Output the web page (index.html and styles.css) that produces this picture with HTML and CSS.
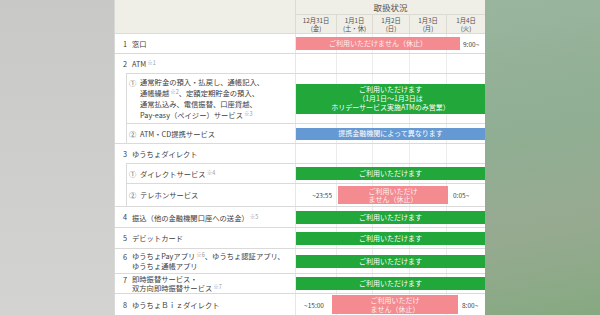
FILE: index.html
```html
<!DOCTYPE html>
<html lang="ja">
<head>
<meta charset="utf-8">
<title>年末年始の取扱状況</title>
<link rel="stylesheet" href="styles.css">
</head>
<body>
<div class="page">
  <div class="side-left"></div>
  <div class="table">
    <div class="row head">
      <div class="label"></div>
      <div class="head-data">
        <div class="head-title">取扱状況</div>
        <div class="dates">
          <div class="date"><span>12月31日</span><span>(金)</span></div>
          <div class="date"><span>1月1日</span><span>(土・休)</span></div>
          <div class="date"><span>1月2日</span><span>(日)</span></div>
          <div class="date"><span>1月3日</span><span>(月)</span></div>
          <div class="date"><span>1月4日</span><span>(火)</span></div>
        </div>
      </div>
    </div>

    <div class="row h20">
      <div class="label"><span class="num">1</span><span>窓口</span></div>
      <div class="data">
        <div class="bar pink w164">ご利用いただけません（休止）</div>
        <div class="time after3">9:00~</div>
      </div>
    </div>

    <div class="row h20">
      <div class="label"><span class="num">2</span><span>ATM<span class="note">※1</span></span></div>
      <div class="data"></div>
    </div>

    <div class="row sub h50">
      <div class="label"><span class="mark">①</span><span class="lines">通常貯金の預入・払戻し、通帳記入、<br>通帳繰越<span class="note">※2</span>、定額定期貯金の預入、<br>通常払込み、電信振替、口座貸越、<br>Pay-easy（ペイジー）サービス<span class="note">※3</span></span></div>
      <div class="data">
        <div class="bar green full tall">ご利用いただけます<br>（1月1日～1月3日は<br>ホリデーサービス実施ATMのみ営業）</div>
      </div>
    </div>

    <div class="row sub h20">
      <div class="label"><span class="mark">②</span><span>ATM・CD提携サービス</span></div>
      <div class="data">
        <div class="bar blue full">提携金融機関によって異なります</div>
      </div>
    </div>

    <div class="row h20">
      <div class="label"><span class="num">3</span><span>ゆうちょダイレクト</span></div>
      <div class="data"></div>
    </div>

    <div class="row sub h20">
      <div class="label"><span class="mark">①</span><span>ダイレクトサービス<span class="note">※4</span></span></div>
      <div class="data">
        <div class="bar green full">ご利用いただけます</div>
      </div>
    </div>

    <div class="row sub h23">
      <div class="label"><span class="mark">②</span><span>テレホンサービス</span></div>
      <div class="data">
        <div class="time before42">~23:55</div>
        <div class="bar pink w110 two">ご利用いただけ<br>ません（休止）</div>
        <div class="time after5">0:05~</div>
      </div>
    </div>

    <div class="row h21">
      <div class="label"><span class="num">4</span><span>振込（他の金融機関口座への送金）<span class="note">※5</span></span></div>
      <div class="data">
        <div class="bar green full">ご利用いただけます</div>
      </div>
    </div>

    <div class="row h21">
      <div class="label"><span class="num">5</span><span>デビットカード</span></div>
      <div class="data">
        <div class="bar green full">ご利用いただけます</div>
      </div>
    </div>

    <div class="row h25">
      <div class="label"><span class="num">6</span><span class="lines">ゆうちょPayアプリ<span class="note">※6</span>、ゆうちょ認証アプリ、<br>ゆうちょ通帳アプリ</span></div>
      <div class="data">
        <div class="bar green full">ご利用いただけます</div>
      </div>
    </div>

    <div class="row h20">
      <div class="label"><span class="num">7</span><span class="lines">即時振替サービス・<br>双方向即時振替サービス<span class="note">※7</span></span></div>
      <div class="data">
        <div class="bar green full">ご利用いただけます</div>
      </div>
    </div>

    <div class="row h22">
      <div class="label"><span class="num">8</span><span>ゆうちょＢｉｚダイレクト</span></div>
      <div class="data">
        <div class="time before36">~15:00</div>
        <div class="bar pink w126 two tall19">ご利用いただけ<br>ません（休止）</div>
        <div class="time after4">8:00~</div>
      </div>
    </div>
  </div>
  <div class="side-right"></div>
</div>
</body>
</html>
```

FILE: styles.css
```css
html, body {
  margin: 0;
  padding: 0;
}

body {
  width: 600px;
  height: 315px;
  overflow: hidden;
  font-family: "Noto Sans CJK JP", "Noto Sans", sans-serif;
  color: #3c3c3c;
}

.page {
  display: flex;
  width: 600px;
  height: 315px;
}

.side-left {
  width: 115px;
  flex: none;
  background: linear-gradient(#c8c8c7, #d3d3d2);
  border-right: 1px solid #d8d8d6;
  box-sizing: border-box;
}

.side-right {
  flex: 1;
  background: linear-gradient(170deg, #9ab59e 0%, #8fae93 40%, #97aa91 70%, #86a981 100%);
}

.table {
  width: 370px;
  flex: none;
  background: #fff;
  display: flex;
  flex-direction: column;
  overflow: hidden;
}

.row {
  display: flex;
  box-sizing: border-box;
  border-top: 1px solid #dadada;
  flex: none;
}

.row.sub {
  margin-left: 11px;
  border-left: 1px solid #dadada;
}

.h20 { height: 20px; }
.h21 { height: 21px; }
.h22 { height: 22px; }
.h23 { height: 23px; }
.h25 { height: 25px; }
.h50 { height: 50px; }

.label {
  width: 181px;
  flex: none;
  box-sizing: border-box;
  padding-left: 8px;
  display: flex;
  align-items: center;
  font-size: 7.3px;
  line-height: 10px;
  white-space: nowrap;
}

.sub .label {
  width: 169px;
  padding-left: 2px;
}

.num {
  width: 9px;
  flex: none;
}

.mark {
  width: 11px;
  flex: none;
  color: #666;
}

.sub.h50 .mark {
  align-self: flex-start;
  margin-top: 4px;
  line-height: 10.5px;
}

.sub.h50 .lines {
  line-height: 10.5px;
}

.h25 .num {
  align-self: flex-start;
  margin-top: 3px;
}

.h25 .lines {
  line-height: 9.5px;
}

.h20 .lines {
  line-height: 8.5px;
}

.h20 .label:has(.lines) .num {
  align-self: flex-start;
  margin-top: 1.5px;
  line-height: 8.5px;
}

.note {
  font-size: 5.5px;
  color: #9a9a9a;
  vertical-align: 2px;
  margin-left: 1px;
}

.data {
  flex: 1;
  display: flex;
  align-items: center;
  border-left: 1px solid #e6e6e6;
  margin-left: -1px;
  background:
    linear-gradient(#ececec, #ececec) 40px 0 / 1px 100% no-repeat,
    linear-gradient(#ececec, #ececec) 76px 0 / 1px 100% no-repeat,
    linear-gradient(#ececec, #ececec) 113px 0 / 1px 100% no-repeat,
    linear-gradient(#ececec, #ececec) 150px 0 / 1px 100% no-repeat;
}

.bar {
  height: 13px;
  flex: none;
  display: flex;
  align-items: center;
  justify-content: center;
  text-align: center;
  color: #fff;
  font-size: 7px;
  line-height: 9px;
  white-space: nowrap;
}

.bar.full { width: 189px; }
.bar.w164 { width: 164px; }
.bar.w110 { width: 110px; }
.bar.w126 { width: 126px; }

.bar.tall { height: 30px; }
.bar.two { height: 18px; line-height: 8.5px; }
.bar.tall19 { height: 19px; }

.blue { background: #6499d3; height: 12px; }
.green { background: #21a73a; }
.pink { background: #f48b90; color: #fdf0f0; }

.time {
  font-size: 6.5px;
  color: #444;
  white-space: nowrap;
  flex: none;
}

.after3 { margin-left: 3px; }
.after4 { margin-left: 4px; }
.after5 { margin-left: 5px; }

.before42 {
  width: 42px;
  box-sizing: border-box;
  padding-right: 6px;
  text-align: right;
}

.before36 {
  width: 36px;
  text-align: center;
}

/* header */
.row.head {
  height: 33px;
  border-top: none;
  background: #efeee7;
}

.head-data {
  flex: 1;
  display: flex;
  flex-direction: column;
  border-left: 1px solid #dcdbd3;
  margin-left: -1px;
}

.head-title {
  height: 15px;
  box-sizing: border-box;
  border-bottom: 1px solid #dcdbd3;
  text-align: center;
  font-size: 8.5px;
  line-height: 14px;
  color: #505050;
}

.dates {
  flex: 1;
  display: grid;
  grid-template-columns: 40px 36px 37px 37px 39px;
}

.date {
  display: flex;
  flex-direction: column;
  align-items: center;
  justify-content: center;
  gap: 1px;
  font-size: 6.3px;
  line-height: 7px;
  color: #505050;
  white-space: nowrap;
}

.date + .date {
  border-left: 1px solid #dcdbd3;
}
```
